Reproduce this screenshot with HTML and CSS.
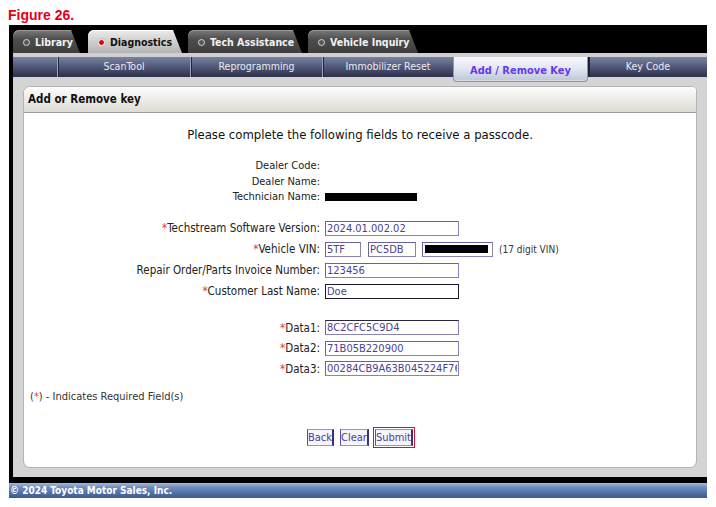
FILE: index.html
```html
<!DOCTYPE html>
<html lang="en">

<head>
    <meta charset="UTF-8">
    <meta name="viewport" content="width=device-width, initial-scale=1.0">
    <title>Add or Remove key</title>
    <link rel="stylesheet" href="styles.css">
</head>

<body>
    <div class="figure-title">Figure 26.</div>

    <div class="frame">
        <div class="tabs">
            <div class="tab"><span class="dot"></span>Library</div>
            <div class="tab active"><span class="dot"></span>Diagnostics</div>
            <div class="tab"><span class="dot"></span>Tech Assistance</div>
            <div class="tab"><span class="dot"></span>Vehicle Inquiry</div>
        </div>

        <div class="strip"></div>

        <div class="subnav">
            <div class="subnav-item blank"></div>
            <div class="subnav-item w133">ScanTool</div>
            <div class="subnav-item w132">Reprogramming</div>
            <div class="subnav-item w131">Immobilizer Reset</div>
            <div class="subnav-item current">Add / Remove Key</div>
            <div class="subnav-item last">Key Code</div>
        </div>

        <div class="content">
            <div class="panel">
                <div class="panel-head">Add or Remove key</div>
                <div class="panel-body">
                    <p class="intro">Please complete the following fields to receive a passcode.</p>

                    <div class="info">
                        <div class="label">Dealer Code:</div>
                        <div class="value"></div>
                        <div class="label">Dealer Name:</div>
                        <div class="value"></div>
                        <div class="label">Technician Name:</div>
                        <div class="value"><span class="redact tech"></span></div>
                    </div>

                    <div class="form">
                        <div class="label"><span class="req">*</span>Techstream Software Version:</div>
                        <div class="value"><input class="field" type="text" value="2024.01.002.02"></div>

                        <div class="label"><span class="req">*</span>Vehicle VIN:</div>
                        <div class="value vin">
                            <input class="field vin1" type="text" value="5TF">
                            <input class="field vin2" type="text" value="PC5DB">
                            <span class="field vin3"><span class="redact"></span></span>
                            <span class="hint">(17 digit VIN)</span>
                        </div>

                        <div class="label">Repair Order/Parts Invoice Number:</div>
                        <div class="value"><input class="field" type="text" value="123456"></div>

                        <div class="label"><span class="req">*</span>Customer Last Name:</div>
                        <div class="value"><input class="field focused" type="text" value="Doe"></div>
                    </div>

                    <div class="form data">
                        <div class="label"><span class="req">*</span>Data1:</div>
                        <div class="value"><input class="field dark-top" type="text" value="8C2CFC5C9D4"></div>

                        <div class="label"><span class="req">*</span>Data2:</div>
                        <div class="value"><input class="field" type="text" value="71B05B220900"></div>

                        <div class="label"><span class="req">*</span>Data3:</div>
                        <div class="value"><input class="field" type="text" value="00284CB9A63B045224F76"></div>
                    </div>

                    <p class="note">(<span class="req">*</span>) - Indicates Required Field(s)</p>

                    <div class="buttons">
                        <button class="btn">Back</button>
                        <button class="btn">Clear</button>
                        <button class="btn submit">Submit</button>
                    </div>
                </div>
            </div>
        </div>
    </div>

    <div class="footer">&copy; 2024 Toyota Motor Sales, Inc.</div>
</body>

</html>
```

FILE: styles.css
```css
body {
    margin: 0;
    font-family: "DejaVu Sans Condensed", "DejaVu Sans", sans-serif;
    font-size: 11px;
    color: #222;
    background: #fff;
}

.figure-title {
    box-sizing: border-box;
    height: 25px;
    padding: 5px 0 0 8px;
    line-height: 20px;
    font-family: "Liberation Sans", Arial, sans-serif;
    font-size: 14px;
    font-weight: bold;
    color: #e4001b;
}

/* black shell around the app */
.frame {
    width: 698px;
    margin-left: 9px;
    padding: 5px 0 6px 4px;
    box-sizing: border-box;
    background: #000;
}

/* top tabs */
.tabs {
    display: flex;
    height: 23px;
}

.tab {
    display: flex;
    align-items: center;
    gap: 5px;
    height: 23px;
    padding: 1px 16px 0 10px;
    box-sizing: border-box;
    border-radius: 6px 0 0 0;
    clip-path: polygon(0 0, calc(100% - 9px) 0, 100% 100%, 0 100%);
    background: linear-gradient(#7a7a7a, #4e4e4e 40%, #3e3e3e);
    box-shadow: inset 0 1px 0 #9a9a9a;
    color: #f2f2f2;
    font-weight: bold;
    font-size: 10.5px;
    white-space: nowrap;
}

.tab:first-child { width: 67px; margin-right: 8px; }
.tab:nth-child(2) { width: 94px; margin-right: 6px; }
.tab:nth-child(3) { width: 114px; margin-right: 6px; }
.tab:nth-child(4) { width: 110px; }

.tab.active {
    background: linear-gradient(#ececec, #d2d2d2 45%, #b4b4b4);
    box-shadow: inset 0 1px 0 #fff;
    color: #111;
}

.dot {
    width: 5px;
    height: 5px;
    border-radius: 50%;
    border: 1px solid #d8d8d8;
    background: #555;
    flex: none;
}

.tab.active .dot {
    border: 1px solid #fff;
    background: #e40010;
    box-shadow: 0 0 0 1px #c8c8c8;
}

.strip {
    height: 4px;
    background: #cfcfcf;
}

/* blue sub navigation */
.subnav {
    display: flex;
    height: 20px;
    background: linear-gradient(#7a82a2, #545b7c 45%, #2c3048);
}

.subnav-item {
    display: flex;
    align-items: center;
    justify-content: center;
    height: 20px;
    box-sizing: border-box;
    border-left: 1px solid #9aa0b8;
    box-shadow: inset 1px 0 0 #23273a;
    color: #ececf2;
    font-size: 10.5px;
    padding-bottom: 2px;
}

.subnav-item.blank {
    width: 44px;
    border-left: none;
    box-shadow: none;
}

.w133 { width: 133px; }
.w132 { width: 132px; }
.w131 { width: 131px; }

.subnav-item.current {
    position: relative;
    z-index: 1;
    width: 135px;
    height: 25px;
    padding-bottom: 0;
    padding-top: 2px;
    border: 1px solid #8e96b0;
    border-top: none;
    border-radius: 0 0 4px 4px;
    background: linear-gradient(#f6f8fc, #e0e6f0 50%, #bcc6d8);
    box-shadow: inset 0 -1px 0 #d6dbe6;
    color: #6a35f0;
    font-weight: bold;
    font-size: 11px;
}

.subnav-item.last {
    flex: 1;
    border-left: 1px solid #1a1d2e;
}

/* grey work area */
.content {
    padding: 9px 10px;
    background: #d4d4d4;
}

.panel {
    background: #fff;
    border: 1px solid #b4b4b4;
    border-radius: 7px 5px 7px 7px;
    overflow: hidden;
}

.panel-head {
    height: 25px;
    padding-left: 4px;
    line-height: 24px;
    background: linear-gradient(#fcfcfc, #ecebe8 55%, #dcdbd4);
    border-bottom: 1px solid #9c9c9c;
    font-weight: bold;
    font-size: 11.5px;
    color: #111;
}

.panel-body {
    padding-bottom: 21px;
}

.intro {
    margin: 15px 0 0;
    text-align: center;
    line-height: 14px;
    font-size: 13px;
    color: #111;
}

.info,
.form {
    display: grid;
    grid-template-columns: 296px 1fr;
    column-gap: 5px;
}

.info {
    margin-top: 16px;
    grid-auto-rows: 15.5px;
    align-items: center;
}

.form {
    margin-top: 13px;
    grid-auto-rows: 21px;
    align-items: center;
}

.form .label {
    font-size: 11.5px;
}

.form.data {
    margin-top: 16px;
    grid-auto-rows: 20.5px;
}

.label {
    text-align: right;
    color: #222;
    white-space: nowrap;
}

.req {
    color: #e2402a;
}

.value {
    display: flex;
    align-items: center;
}

.redact {
    display: block;
    height: 8px;
    background: #000;
}

.redact.tech {
    width: 92px;
}

.field {
    box-sizing: border-box;
    width: 134px;
    height: 15px;
    margin: 0;
    padding: 0 1px;
    border: 1px solid #8a82b6;
    border-top-color: #6a62a0;
    border-left-color: #6a62a0;
    background: #fff;
    font-family: "DejaVu Sans Condensed", "DejaVu Sans", sans-serif;
    font-size: 11px;
    color: #4d4290;
    outline: none;
}

.field.focused {
    border-color: #1c1a30;
}

.field.dark-top {
    border-top-color: #2a2640;
}

.vin {
    gap: 6px;
}

.vin1 { width: 36px; }
.vin2 { width: 48px; margin-left: 1px; }

.vin3 {
    display: flex;
    align-items: center;
    width: 71px;
    padding: 0 4px 0 2px;
}

.vin3 .redact {
    flex: 1;
}

.hint {
    font-size: 10px;
    color: #333;
}

.note {
    margin: 11px 0 0 6px;
    line-height: 14px;
    color: #333;
}

.buttons {
    display: flex;
    justify-content: center;
    gap: 6px;
    margin-top: 25px;
}

.btn {
    height: 17px;
    padding: 0;
    border: 1px solid #9a92c4;
    border-left-color: #5a4f9a;
    border-right: 2px solid #3a2f7a;
    background: #f6f5fb;
    font-family: "DejaVu Sans Condensed", "DejaVu Sans", sans-serif;
    font-size: 11px;
    line-height: 13px;
    color: #4b3c98;
}

.btn.submit {
    outline: 1px solid #d8102a;
    outline-offset: 1px;
}

.footer {
    width: 698px;
    height: 15px;
    margin-left: 9px;
    padding-left: 1px;
    box-sizing: border-box;
    line-height: 15px;
    background: linear-gradient(#a4b8da, #6f8cbc 30%, #4f6ea4 70%, #3c5a90);
    color: #fff;
    font-weight: bold;
    font-size: 10px;
    white-space: nowrap;
}
```
